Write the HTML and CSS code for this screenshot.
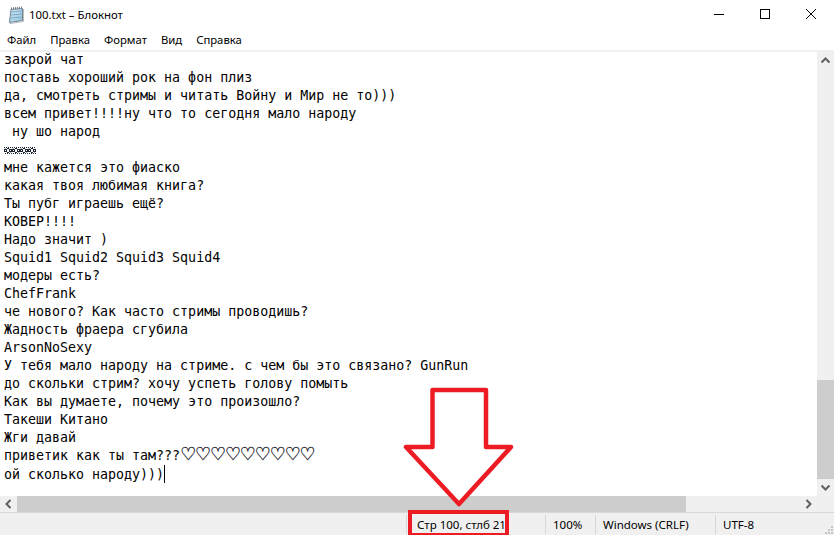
FILE: index.html
```html
<!DOCTYPE html>
<html lang="ru">
<head>
<meta charset="utf-8">
<title>100.txt – Блокнот</title>
<link rel="stylesheet" href="styles.css">
</head>
<body>
<div class="window">
  <header class="titlebar">
    <svg class="app-icon" width="16" height="18" viewBox="0 0 16 18">
      <defs>
        <linearGradient id="page" x1="0" y1="0" x2="1" y2="1">
          <stop offset="0" stop-color="#d4ecf8"/>
          <stop offset="1" stop-color="#8fc0dc"/>
        </linearGradient>
      </defs>
      <path d="M3 3.5 L14.5 2.5 L14.5 14.5 L1.5 16.5 Z" fill="url(#page)" stroke="#6d8596"/>
      <path d="M3 6 L14 5 M2.8 9 L14 8 M2.5 12 L14 11" stroke="#7fa9c4"/>
      <path d="M3 2.5 L14 1.5" stroke="#777" stroke-width="2" stroke-dasharray="1 1"/>
      <path d="M15.5 3 V15.5 L2 17.5" fill="none" stroke="#bdbdbd"/>
    </svg>
    <span class="title">100.txt – Блокнот</span>
    <div class="controls">
      <svg class="ctl" width="46" height="30" viewBox="0 0 46 30"><path d="M18 14.5 H28" stroke="#000"/></svg>
      <svg class="ctl" width="46" height="30" viewBox="0 0 46 30"><rect x="18.5" y="9.5" width="9" height="9" fill="none" stroke="#000"/></svg>
      <svg class="ctl" width="46" height="30" viewBox="0 0 46 30"><path d="M18 9 L28 19 M28 9 L18 19" stroke="#000"/></svg>
    </div>
  </header>
  <nav class="menu">
    <span>Файл</span><span>Правка</span><span>Формат</span><span>Вид</span><span>Справка</span>
  </nav>
  <div class="rule"></div>
  <div class="workspace">
    <pre class="text">закрой чат
поставь хороший рок на фон плиз
да, смотреть стримы и читать Войну и Мир не то)))
всем привет!!!!ну что то сегодня мало народу
 ну шо народ
<svg class="dither" width="32" height="7" viewBox="0 0 32 7"><defs><pattern id="dots" width="8" height="7" patternUnits="userSpaceOnUse"><rect width="8" height="7" fill="#fff"/><path d="M0 0h1v1h-1zM2 0h1v1h-1zM4 0h1v1h-1zM6 0h1v1h-1zM1 6h1v1h-1zM3 6h1v1h-1zM5 6h1v1h-1zM7 6h1v1h-1zM0 2h3v3h-3zM5 2h3v3h-3zM3 1h2v1h-2zM3 5h2v1h-2z" fill="#1c2430"/><path d="M1 3h1v1h-1zM6 3h1v1h-1z" fill="#fff"/><path d="M1 1h1v1h-1zM6 5h1v1h-1z" fill="#8aa6c4"/></pattern></defs><rect width="32" height="7" fill="url(#dots)"/></svg>
мне кажется это фиаско
какая твоя любимая книга?
Ты пубг играешь ещё?
КОВЕР!!!!
Надо значит )
Squid1 Squid2 Squid3 Squid4
модеры есть?
ChefFrank
че нового? Как часто стримы проводишь?
Жадность фраера сгубила
ArsonNoSexy
У тебя мало народу на стриме. с чем бы это связано? GunRun
до скольки стрим? хочу успеть голову помыть
Как вы думаете, почему это произошло?
Такеши Китано
Жги давай
приветик как ты там???<span class="hearts">♡♡♡♡♡♡♡♡♡</span>
ой сколько народу)))<span class="caret"></span></pre>
    <div class="vscroll">
      <svg class="arrow" width="17" height="17" viewBox="0 0 17 17"><path d="M4.5 10.5 L8.5 6.5 L12.5 10.5" fill="none" stroke="#606060" stroke-width="2"/></svg>
      <div class="vtrack"><div class="vthumb"></div></div>
      <svg class="arrow" width="17" height="17" viewBox="0 0 17 17"><path d="M4.5 6.5 L8.5 10.5 L12.5 6.5" fill="none" stroke="#606060" stroke-width="2"/></svg>
    </div>
  </div>
  <div class="hscroll">
    <svg class="arrow" width="17" height="16" viewBox="0 0 17 16"><path d="M10.5 4 L6.5 8 L10.5 12" fill="none" stroke="#606060" stroke-width="2"/></svg>
    <div class="htrack"><div class="hthumb"></div></div>
    <svg class="arrow" width="17" height="16" viewBox="0 0 17 16"><path d="M6.5 4 L10.5 8 L6.5 12" fill="none" stroke="#606060" stroke-width="2"/></svg>
    <div class="corner"></div>
  </div>
  <footer class="status">
    <span class="cell pos">Стр 100, стлб 21</span>
    <span class="cell zoom">100%</span>
    <span class="cell eol">Windows (CRLF)</span>
    <span class="cell enc">UTF-8</span>
    <svg class="grip" width="10" height="10" viewBox="0 0 10 10"><path d="M7 1h2v2h-2zM4 4h2v2h-2zM7 4h2v2h-2zM1 7h2v2h-2zM4 7h2v2h-2zM7 7h2v2h-2z" fill="#c4c4c4"/></svg>
  </footer>
  <svg class="callout-arrow" width="116" height="124" viewBox="0 0 116 124">
    <path d="M29.5 3 H83 V60 H108 L56 117 L3 60 H29.5 Z" fill="#fff" stroke="#ed1c24" stroke-width="4.5" stroke-linejoin="round"/>
  </svg>
  <div class="callout-box"></div>
</div>
</body>
</html>
```
FILE: styles.css
```css
* { box-sizing: border-box; }
html, body { margin: 0; padding: 0; background: #fff; }
.window {
  position: relative;
  width: 834px;
  height: 535px;
  display: flex;
  flex-direction: column;
  overflow: hidden;
  font-family: "Noto Sans", "Open Sans", sans-serif;
  font-size: 11.5px;
  color: #000;
}
.titlebar {
  height: 30px;
  display: flex;
  align-items: center;
  padding-left: 8px;
  flex: none;
}
.app-icon { margin-right: 5px; flex: none; }
.title { font-size: 11.4px; line-height: 14px; margin-bottom: 1px; }
.controls { margin-left: auto; display: flex; }
.ctl { display: block; }
.menu {
  height: 18px;
  display: flex;
  align-items: center;
  gap: 14px;
  padding-left: 7px;
  font-size: 11.3px;
  flex: none;
}
.rule { height: 4px; background: #fff; border-bottom: 2px solid #f0f0f0; flex: none; }
.workspace { height: 444px; display: flex; flex: none; }
.text {
  flex: 1;
  margin: -1px 0 0;
  padding: 0 0 0 4px;
  overflow: hidden;
  font-family: "DejaVu Sans Mono", monospace;
  font-size: 13.3px;
  line-height: 18px;
  white-space: pre;
}
.dither { vertical-align: 0; }
.hearts {
  font-family: "DejaVu Sans", sans-serif;
  font-size: 18px;
  line-height: 0;
  letter-spacing: -1.2px;
  color: #1a1a2a;
  -webkit-text-stroke: 0.3px #1a1a2a;
}
.caret {
  display: inline-block;
  width: 1px;
  height: 18px;
  background: #000;
  vertical-align: -4px;
}
.vscroll {
  width: 17px;
  flex: none;
  display: flex;
  flex-direction: column;
  background: #f0f0f0;
}
.arrow { display: block; flex: none; }
.vtrack { flex: 1; display: flex; flex-direction: column; justify-content: flex-end; }
.vthumb { height: 99px; background: #cdcdcd; }
.hscroll {
  height: 16px;
  display: flex;
  background: #f0f0f0;
  flex: none;
}
.htrack { flex: 1; }
.hthumb { width: 669px; height: 100%; background: #cdcdcd; }
.corner { width: 17px; background: #f0f0f0; flex: none; }
.status {
  position: relative;
  flex: 1;
  display: flex;
  align-items: center;
  background: #f0f0f0;
  border-top: 1px solid #d7d7d7;
  padding-left: 406px;
}
.cell {
  height: 19px;
  display: flex;
  align-items: center;
  padding-left: 7px;
  border-left: 1px solid #d7d7d7;
  flex: none;
}
.pos { width: 139px; padding-left: 10px; }
.zoom { width: 50px; }
.eol { width: 120px; }
.grip { position: absolute; right: 0; bottom: 0; }
.callout-arrow { position: absolute; left: 403px; top: 387px; }
.callout-box {
  position: absolute;
  left: 408px;
  top: 510px;
  width: 101px;
  height: 25px;
  border: 4px solid #ed1c24;
  border-bottom-width: 2px;
}
```
